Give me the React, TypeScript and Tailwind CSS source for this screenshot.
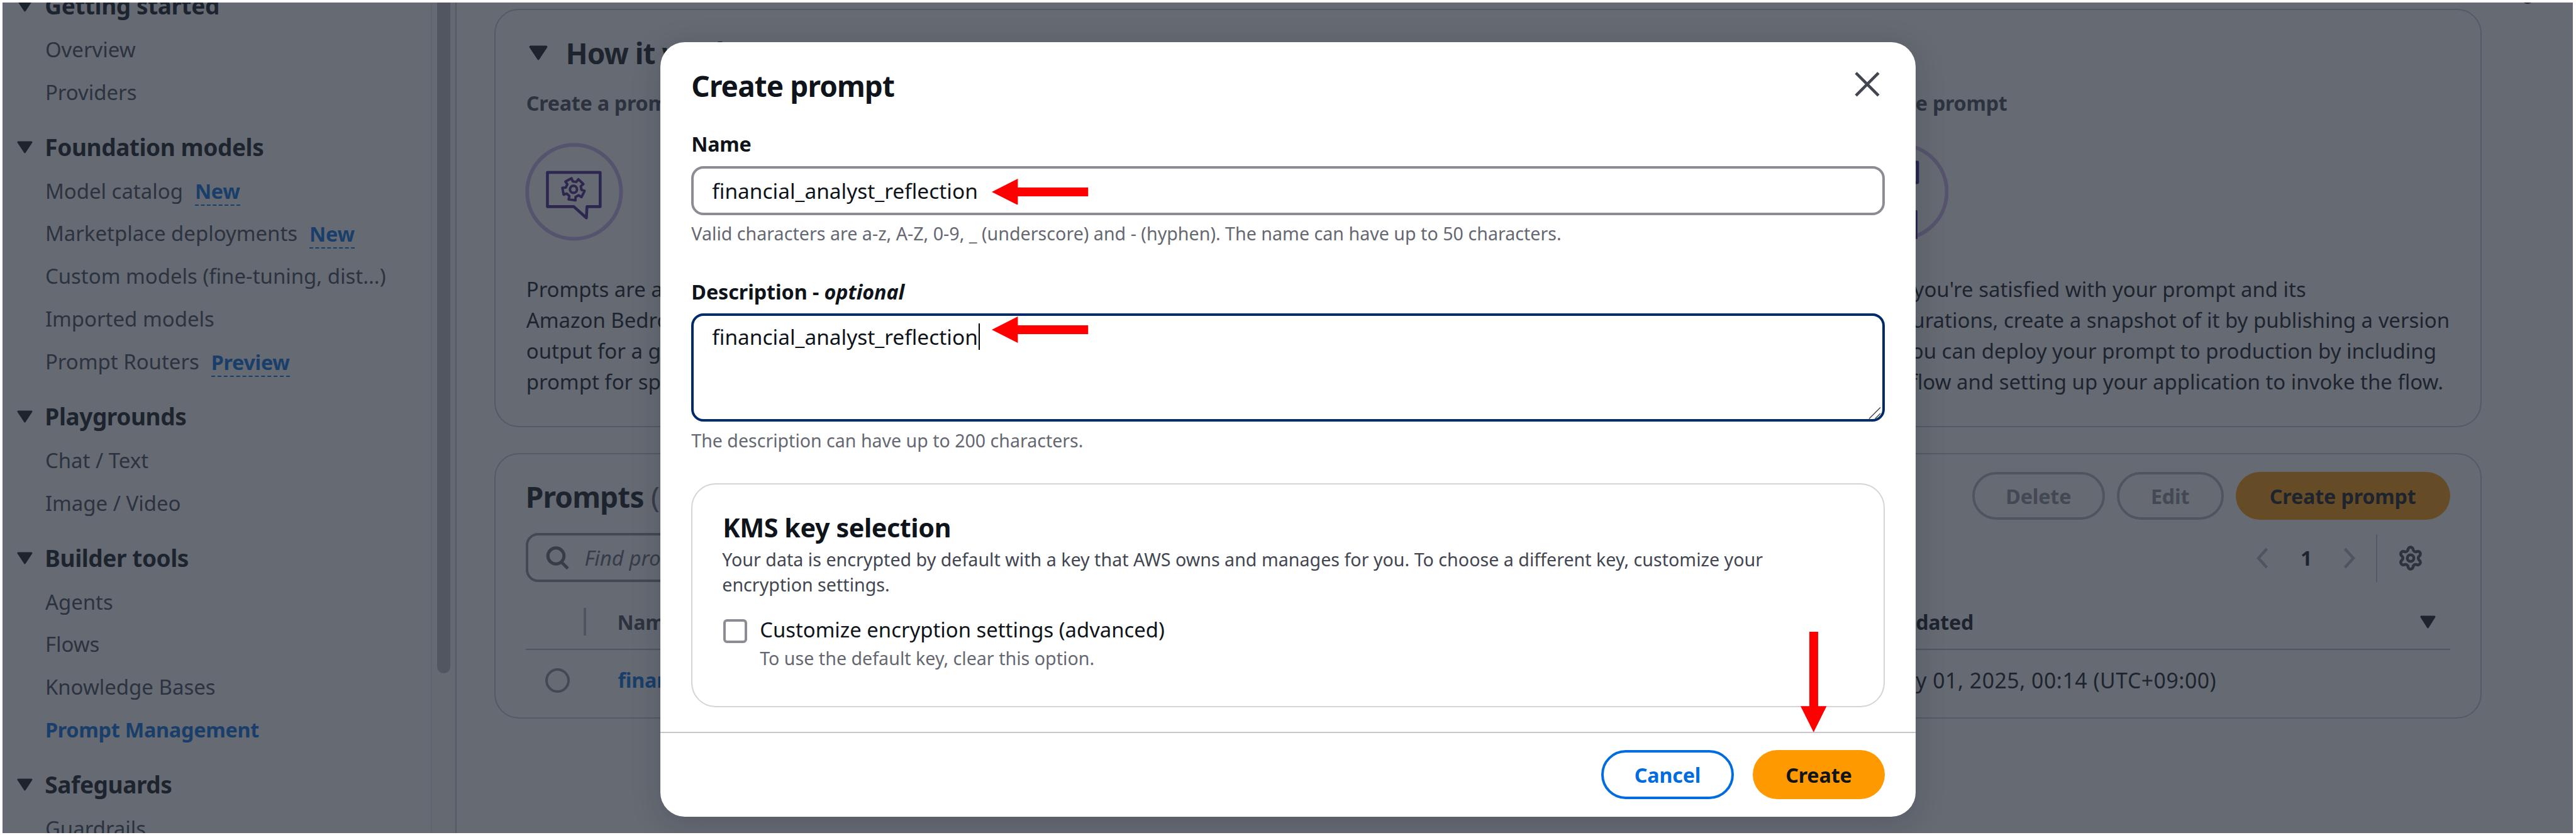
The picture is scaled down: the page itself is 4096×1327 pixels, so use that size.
import type { ReactNode } from "react";
import { Settings } from "lucide-react";

type NavItem = { label: string; badge?: string; active?: boolean };
type NavGroup = { title: string; items: NavItem[] };

const groups: NavGroup[] = [
  { title: "Getting started", items: [{ label: "Overview" }, { label: "Providers" }] },
  {
    title: "Foundation models",
    items: [
      { label: "Model catalog", badge: "New" },
      { label: "Marketplace deployments", badge: "New" },
      { label: "Custom models (fine-tuning, dist...)" },
      { label: "Imported models" },
      { label: "Prompt Routers", badge: "Preview" },
    ],
  },
  { title: "Playgrounds", items: [{ label: "Chat / Text" }, { label: "Image / Video" }] },
  {
    title: "Builder tools",
    items: [
      { label: "Agents" },
      { label: "Flows" },
      { label: "Knowledge Bases" },
      { label: "Prompt Management", active: true },
    ],
  },
  { title: "Safeguards", items: [{ label: "Guardrails" }] },
];

function Triangle({ className }: { className: string }) {
  return (
    <svg viewBox="0 0 26 20" preserveAspectRatio="none" className={className}>
      <path d="M2 2H24L13 18Z" fill="#0f141a" stroke="#0f141a" strokeWidth="3" strokeLinejoin="round" />
    </svg>
  );
}

function Sidebar() {
  return (
    <nav className="flex h-full w-[723.5px] shrink-0 border-r-[2.1px] border-[#c6c6cd]">
      <div className="w-[684px] border-r-[2.1px] border-[#ececf0]">
        <div className="-mt-[30.8px] flex flex-col">
          {groups.map((g, i) => (
            <section key={g.title} className={i ? "mt-[17.7px]" : ""}>
              <h3 className="flex h-[71.6px] items-center pl-[23.5px] text-[37.1px] font-bold tracking-[-0.45px] text-[#0f141a]">
                <Triangle className="mt-[1px] mr-[19px] h-[20px] w-[25px]" />
                {g.title}
              </h3>
              {g.items.map((it) => (
                <div
                  key={it.label}
                  className={
                    it.active
                      ? "flex h-[67.9px] items-center pl-[68px] text-[32.4px] font-bold tracking-[-0.25px] text-[#006ce0]"
                      : "flex h-[67.9px] items-center pl-[68px] text-[33px] text-[#424650]"
                  }
                >
                  {it.label}
                  {it.badge && (
                    <span className="mt-[4px] ml-[19px] border-b-[2.1px] border-dashed border-[#006ce0] text-[32.3px] leading-[42px] font-bold tracking-[-0.25px] text-[#006ce0]">
                      {it.badge}
                    </span>
                  )}
                </div>
              ))}
            </section>
          ))}
        </div>
      </div>
      <div className="flex flex-1 justify-center bg-[#fafafa]">
        <div className="h-[1068px] w-[21.5px] rounded-b-full bg-[#bcbcbf]" />
      </div>
    </nav>
  );
}

/* Five-toothed cog outline around (cx, cy). */
function cogPath(cx: number, cy: number) {
  const at = (r: number, deg: number) => {
    const a = (deg * Math.PI) / 180;
    return `${(cx + r * Math.cos(a)).toFixed(2)} ${(cy + r * Math.sin(a)).toFixed(2)}`;
  };
  const pts: string[] = [];
  for (let k = 0; k < 5; k++) {
    const c = 242 + 72 * k;
    pts.push(at(12.6, c - 23), at(17.8, c - 18), at(17.8, c + 18), at(12.6, c + 23));
  }
  return `M${pts.join("L")}Z`;
}

function PromptIcon() {
  return (
    <svg viewBox="0 0 156 156" className="size-[156px]">
      <circle cx="78" cy="78" r="74.8" fill="none" stroke="#cdb5e8" strokeWidth="6" />
      <g fill="none" stroke="#44218a" strokeWidth="4.6" strokeLinejoin="round" strokeLinecap="round">
        <path d="M35.5 47H119.5V101.5H98.5L97.5 119.5L77.5 101.5H35.5Z" />
        <path d={cogPath(77, 74)} strokeWidth="4" />
        <circle cx="77" cy="74" r="5.6" strokeWidth="4" />
      </g>
    </svg>
  );
}

function DeployIcon() {
  return (
    <svg viewBox="0 0 156 156" className="size-[156px]">
      <circle cx="78" cy="78" r="74.8" fill="none" stroke="#cdb5e8" strokeWidth="6" />
      <g fill="none" stroke="#34208a" strokeWidth="5" strokeLinejoin="round">
        <path d="M60 31H106V63H60Z" />
        <path d="M52 109.5H103.5V153" />
      </g>
    </svg>
  );
}

function HowColumn({ title, icon, lines }: { title: string; icon: ReactNode; lines: string[] }) {
  return (
    <div className="w-[1055.3px] shrink-0">
      <h4 className="text-[32.3px] leading-[49px] font-bold tracking-[-0.25px] text-[#424650]">{title}</h4>
      <div className="mt-[38px] -ml-[1.5px] h-[156px]">{icon}</div>
      <div className="mt-[52px] text-[33px] leading-[49.1px] whitespace-nowrap text-[#0f141a]">
        {lines.map((l) => (
          <p key={l}>{l}</p>
        ))}
      </div>
    </div>
  );
}

function HowItWorks() {
  return (
    <section className="h-[666.5px] rounded-[39px] border-[2.1px] border-[#c6c6cd] bg-white pl-[49px]">
      <h2 className="flex h-[110px] items-end text-[46px] leading-[82px] font-bold tracking-[-1px] text-[#0f141a]">
        <Triangle className="mr-[29px] mb-[29.5px] ml-[4px] h-[24px] w-[30px]" />
        How it works
      </h2>
      <div className="mt-[14.5px] flex">
        <HowColumn
          title="Create a prompt"
          icon={<PromptIcon />}
          lines={["Prompts are a", "Amazon Bedrock", "output for a given", "prompt for specific"]}
        />
        <div className="w-[1055.3px] shrink-0" />
        <HowColumn
          title="Use the prompt"
          icon={<DeployIcon />}
          lines={[
            "When you're satisfied with your prompt and its",
            "configurations, create a snapshot of it by publishing a version",
            "of it. You can deploy your prompt to production by including",
            "it in a flow and setting up your application to invoke the flow.",
          ]}
        />
      </div>
    </section>
  );
}

function PromptsTable() {
  return (
    <section className="flex h-[422.8px] flex-col rounded-[39px] border-[2.1px] border-[#c6c6cd] bg-white px-[48px]">
      <div className="mt-[28.3px] flex h-[76px] items-center justify-between">
        <h2 className="mt-[4px] text-[46px] leading-[60px] font-bold tracking-[-0.8px] text-[#0f141a]">
          Prompts <span className="font-normal text-[#656871]">(1)</span>
        </h2>
        <div className="flex gap-[19px] text-[32.3px] leading-[46px] font-bold tracking-[-0.15px]">
          <div className="flex h-[76px] w-[211px] items-center justify-center rounded-full border-[4.1px] border-[#b4b4bb] pt-[2px] text-[#8c8c94]">
            Delete
          </div>
          <div className="flex h-[76px] w-[170.5px] items-center justify-center rounded-full border-[4.1px] border-[#b4b4bb] pt-[2px] text-[#8c8c94]">
            Edit
          </div>
          <div className="flex h-[76px] w-[341.5px] items-center justify-center rounded-full bg-[#ff9900] pt-[2px] text-[#0f141a]">
            Create prompt
          </div>
        </div>
      </div>
      <div className="mt-[21px] flex h-[78px] items-center">
        <div className="flex h-[78px] w-[1200px] items-center rounded-[19.6px] border-[4.1px] border-[#8c8c94] pl-[28px]">
          <svg viewBox="0 0 38 38" className="mt-[2px] size-[38px]" fill="none" stroke="#656871" strokeWidth="5">
            <circle cx="16" cy="15.5" r="12.8" />
            <path d="M24.5 25L35 35.5" />
          </svg>
          <span className="mt-[2px] ml-[24px] text-[33px] text-[#656871] italic">Find prompts</span>
        </div>
        <div className="ml-auto flex h-[76px] items-center pt-[2px]">
          <svg viewBox="0 0 20 34" className="h-[34px] w-[20px]" fill="none" stroke="#b4b4bb" strokeWidth="4.5">
            <path d="M17.5 2L4 17L17.5 32" />
          </svg>
          <span className="ml-[49px] w-[22px] text-center text-[32.3px] font-bold text-[#0f141a]">1</span>
          <svg viewBox="0 0 20 34" className="ml-[47.5px] h-[34px] w-[20px]" fill="none" stroke="#b4b4bb" strokeWidth="4.5">
            <path d="M2.5 2L16 17L2.5 32" />
          </svg>
          <div className="ml-[33px] h-[76px] w-[2px] bg-[#c6c6cd]" />
          <Settings className="mr-[42px] ml-[31.5px] size-[42px] text-[#424650]" strokeWidth={2.6} />
        </div>
      </div>
      <div className="mt-[18.6px] flex h-[89.6px] items-center border-b-[2.1px] border-[#b4b4bb] pt-[3px] text-[32.2px] font-bold tracking-[-0.25px] text-[#424650]">
        <div className="-mt-[2px] ml-[92px] h-[44px] w-[4px] bg-[#b4b4bb]" />
        <span className="ml-[50px]">Name</span>
        <div className="ml-auto flex w-[966px] items-center justify-between pr-[23px] text-[#0f141a]">
          <span>Last updated</span>
          <Triangle className="h-[21px] w-[25px]" />
        </div>
      </div>
      <div className="flex h-[94.4px] items-center pt-[3px] text-[33px] text-[#0f141a]">
        <div className="ml-[31px] size-[39px] rounded-full border-[4.1px] border-[#8c8c94]" />
        <span className="ml-[77px] text-[32.3px] font-bold tracking-[-0.15px] text-[#006ce0]">financial_analyst</span>
        <span className="ml-auto w-[957px] text-[33.8px] tracking-[0.55px] whitespace-nowrap">
          January 01, 2025, 00:14 (UTC+09:00)
        </span>
      </div>
    </section>
  );
}

function CreatePromptModal() {
  return (
    <div className="flex h-[1232.6px] w-[1998.5px] flex-col rounded-[39px] bg-white shadow-[0_10px_49px_2px_rgba(0,7,22,0.14)]">
      <header className="flex h-[138.3px] shrink-0 items-center justify-between pr-[57px] pl-[49px]">
        <h1 className="mt-[1px] text-[46px] font-bold tracking-[-0.9px] text-[#0f141a]">Create prompt</h1>
        <svg viewBox="0 0 40 40" className="-mt-[4px] size-[40px]" fill="none" stroke="#424650" strokeWidth="4.6">
          <path d="M2 2L38 38M38 2L2 38" />
        </svg>
      </header>
      <div className="flex flex-col px-[49px] text-[#0f141a]">
        <label className="text-[32.3px] leading-[49px] font-bold tracking-[-0.25px]">Name</label>
        <div className="mt-[9.6px] flex h-[78.3px] items-center rounded-[19.6px] border-[4.1px] border-[#8c8c94] pl-[29px] text-[33.5px]">
          financial_analyst_reflection
        </div>
        <p className="mt-[9px] text-[28.7px] leading-[39.3px] text-[#656871]">
          Valid characters are a-z, A-Z, 0-9, _ (underscore) and - (hyphen). The name can have up to 50 characters.
        </p>
        <label className="mt-[49px] text-[32.4px] leading-[49px] font-bold tracking-[-0.1px]">
          Description - <i>optional</i>
        </label>
        <div className="relative mt-[9.8px] h-[172.3px] rounded-[19.6px] border-[4.1px] border-[#002b66] pt-[9px] pl-[29px]">
          <div className="flex items-center text-[33.5px] leading-[49px]">
            financial_analyst_reflection
            <span className="ml-[1px] h-[42px] w-[2px] bg-black" />
          </div>
          <svg viewBox="0 0 20 20" className="absolute right-[2px] bottom-0 size-[20px]" stroke="#424650" strokeWidth="1.5">
            <path d="M1 19.5L19 1.5M10.5 19.5L19 11" />
          </svg>
        </div>
        <p className="mt-[10px] text-[28.6px] leading-[39.3px] text-[#656871]">
          The description can have up to 200 characters.
        </p>
        <section className="mt-[48.6px] h-[356.7px] rounded-[39px] border-[2.1px] border-[#d4d4d9] px-[47px] pt-[42px]">
          <h2 className="ml-[1px] text-[41.4px] leading-[54px] font-bold tracking-[-0.45px]">KMS key selection</h2>
          <p className="mt-[4px] text-[28.7px] leading-[39.3px] whitespace-nowrap text-[#424650]">
            Your data is encrypted by default with a key that AWS owns and manages for you. To choose a different key, customize your
            <br />
            encryption settings.
          </p>
          <div className="mt-[29px] flex">
            <div className="mt-[7px] mr-[20px] ml-[2px] size-[38px] rounded-[6px] border-[4.1px] border-[#8c8c94]" />
            <div>
              <div className="text-[32.9px] leading-[49px]">Customize encryption settings (advanced)</div>
              <div className="text-[28.7px] leading-[39.3px] text-[#656871]">
                To use the default key, clear this option.
              </div>
            </div>
          </div>
        </section>
      </div>
      <footer className="mt-[38.8px] flex flex-1 justify-end gap-[29.5px] border-t-[2.1px] border-[#c6c6cd] pt-[28px] pr-[49px] text-[32.3px] font-bold tracking-[-0.15px]">
        <button className="h-[78px] w-[212px] rounded-full border-[4.1px] border-[#006ce0] pt-[2px] text-[#006ce0]">Cancel</button>
        <button className="h-[78px] w-[210.5px] rounded-full bg-[#ff9900] pt-[2px] text-[#0f141a]">Create</button>
      </footer>
    </div>
  );
}

/* Annotation arrow pointing left. */
function LeftArrow({ className }: { className: string }) {
  return (
    <svg viewBox="0 0 154 42" className={className} fill="#ff0000">
      <path d="M0 21L41.5 0V14H153.5V28H41.5V42Z" />
    </svg>
  );
}

export default function App() {
  return (
    <div className="h-[1327px] w-[4096px] overflow-hidden bg-white">
      <div className="h-[1329px] w-[4102px] bg-white p-[4px] font-['Noto_Sans',sans-serif] [zoom:0.9985]">
        <div className="relative flex h-[1322px] w-[4093px] overflow-hidden bg-white">
          <Sidebar />
          <main className="ml-[59.5px] flex w-[3164.6px] shrink-0 flex-col gap-[40.5px] pt-[10px]">
            <HowItWorks />
            <PromptsTable />
          </main>
          <div className="absolute -top-[18px] left-[4011px] size-[20px] rounded-full bg-[#0f141a]" />
          <div className="absolute inset-0 bg-[#232b37]/70 pt-[63.4px] pl-[1048px]">
            <CreatePromptModal />
          </div>
          <LeftArrow className="absolute top-[280px] left-[1575.5px] h-[42px] w-[154px]" />
          <LeftArrow className="absolute top-[500px] left-[1575.5px] h-[42px] w-[154px]" />
          <svg
            viewBox="0 0 42 160"
            className="absolute top-[1002px] left-[2863px] h-[160px] w-[42px]"
            fill="#ff0000"
          >
            <path d="M14 0H28V118.4H41.5L20.8 160L0 118.4H14Z" />
          </svg>
        </div>
      </div>
    </div>
  );
}
